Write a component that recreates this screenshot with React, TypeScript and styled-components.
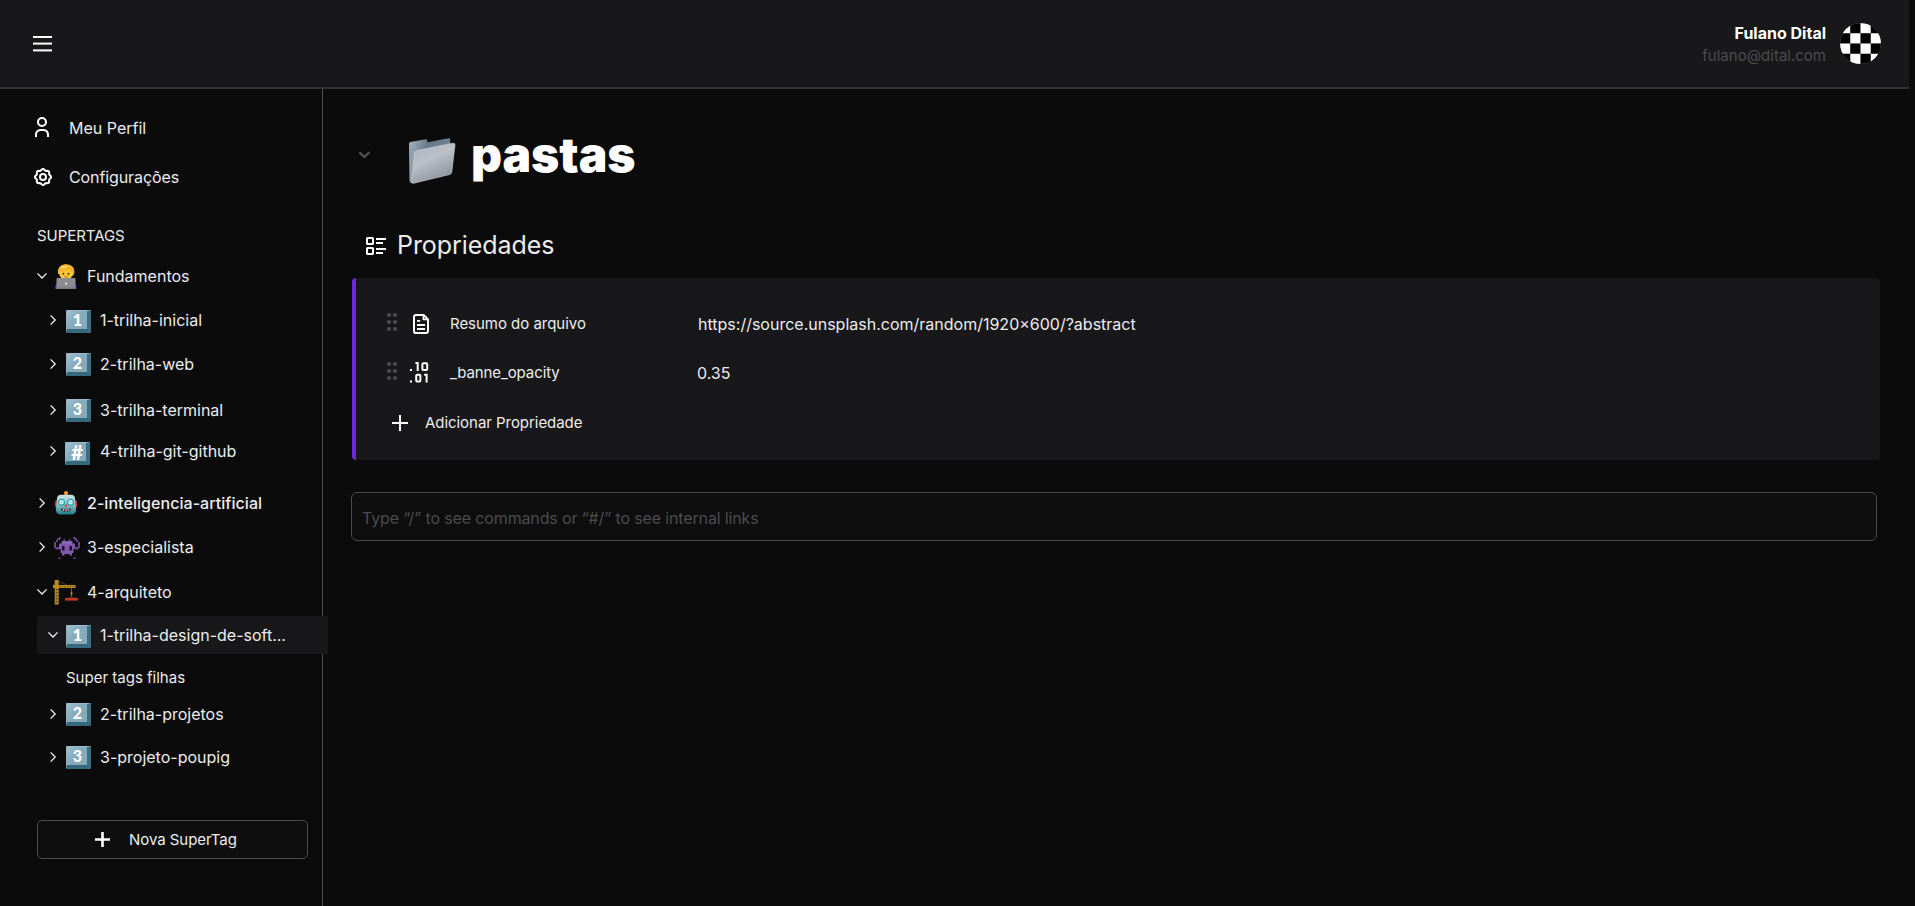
import React from 'react';
import styled, { createGlobalStyle, css } from 'styled-components';

const color = {
  page: '#0b0b0b',
  panel: '#18181a',
  line: '#323235',
  rail: '#4b4b52',
  text: '#ececec',
  muted: '#4b4b4f',
  accent: '#6d28d9',
};

const GlobalStyle = createGlobalStyle`
  *, *::before, *::after { box-sizing: border-box; }
  html, body { margin: 0; padding: 0; background: ${color.page}; }
  body { font-family: Inter, "Liberation Sans", sans-serif; overflow: hidden; }
  svg { display: block; flex: none; overflow: visible; }
`;

const Screen = styled.div`
  display: flex;
  flex-direction: column;
  width: 100vw;
  height: 100vh;
  background: ${color.page};
  color: ${color.text};
`;

const Header = styled.header`
  display: flex;
  align-items: center;
  justify-content: space-between;
  width: calc(100% - 6px);
  height: 89px;
  padding: 0 28px 0 33px;
  background: ${color.panel};
  border-bottom: 2px solid ${color.line};
`;

const MenuButton = styled.button`
  padding: 0;
  border: 0;
  background: none;
`;

const Account = styled.div`
  display: flex;
  align-items: center;
  gap: 14px;
`;

const AccountText = styled.div`
  display: flex;
  flex-direction: column;
  align-items: flex-end;
  gap: 1px;
  padding-top: 1px;
`;

const Label = styled.span<{ $size?: number; $weight?: number; $spacing?: number; $tone?: string }>`
  font-size: ${(p) => p.$size ?? 16}px;
  font-weight: ${(p) => p.$weight ?? 400};
  letter-spacing: ${(p) => p.$spacing ?? 0}px;
  color: ${(p) => p.$tone ?? 'inherit'};
  line-height: 22px;
  white-space: nowrap;
`;

const Body = styled.div`
  display: flex;
  flex: 1;
  min-height: 0;
`;

const Sidebar = styled.aside`
  display: flex;
  flex-direction: column;
  flex: none;
  width: 323px;
  border-right: 1px solid ${color.rail};
`;

const Nav = styled.nav`
  display: flex;
  flex-direction: column;
  margin: 14px 0 0 33px;
`;

const NavItem = styled.a`
  display: grid;
  grid-template-columns: 36px 1fr;
  align-items: center;
  height: 49px;
`;

const SectionTitle = styled.h2`
  display: flex;
  height: 22px;
  margin: 24px 0 0 37px;
`;

const Tree = styled.ul`
  display: flex;
  flex-direction: column;
  margin: 12px 0 0;
  padding: 0;
  list-style: none;
`;

const TreeRow = styled.li<{ $gap: number; $depth: number; $active?: boolean }>`
  display: grid;
  grid-template-columns: ${(p) => (p.$depth ? '29px 34px 1fr' : '17px 33px 1fr')};
  align-items: center;
  height: 34px;
  margin: ${(p) => p.$gap}px 0 0 37px;
  ${(p) =>
    p.$active &&
    css`
      height: 38px;
      margin-right: -6px;
      background: ${color.panel};
      border-radius: 4px 0 0 4px;
      z-index: 1;
    `}
`;

const ChildNote = styled.li`
  display: flex;
  align-items: center;
  height: 34px;
  margin: 7px 0 0 66px;
`;

const Arrow = styled.span<{ $depth: number }>`
  display: flex;
  padding-left: ${(p) => (p.$depth ? 11 : 0)}px;
`;

const Emoji = styled.span<{ $x?: number; $y?: number }>`
  display: flex;
  margin: ${(p) => (p.$y ?? 0) * 2}px 0 0 ${(p) => p.$x ?? 0}px;
`;

const Keycap = styled.span<{ $symbol?: boolean }>`
  display: flex;
  align-items: center;
  justify-content: center;
  width: 25px;
  height: 23px;
  padding-left: ${(p) => (p.$symbol ? 2 : 1)}px;
  border-style: solid;
  border-width: 1px 4px 4px 1px;
  border-color: #9dbccb #3a7083 #35697b #8bb0c1;
  background: linear-gradient(135deg, #9ec0cf 0%, #86abbd 45%, #87aabb 100%);
  border-radius: 1px;
  color: #fff;
  font: ${(p) => (p.$symbol ? '900 20px/18px' : '900 16px/18px')} Lato, sans-serif;
`;

const NewTagButton = styled.button`
  display: flex;
  align-items: center;
  width: 271px;
  height: 39px;
  margin: 46px 0 0 37px;
  padding: 0 0 0 57px;
  gap: 19px;
  border: 1px solid ${color.rail};
  border-radius: 5px;
  background: #0e0e0e;
  color: inherit;
  font-family: inherit;
`;

const Main = styled.main`
  display: flex;
  flex-direction: column;
  flex: 1;
  min-width: 0;
  padding: 35px 35px 0 29px;
`;

const TitleBar = styled.div`
  display: flex;
  align-items: center;
  height: 62px;
  padding-left: 6px;
`;

const TitleIcon = styled.span`
  display: flex;
  margin: 12px 16px 0 39px;
`;

const Title = styled.h1`
  margin: 0;
  font-size: 48px;
  font-weight: 900;
  line-height: 58px;
  color: #fff;
`;

const PropertiesTitle = styled.h3`
  display: flex;
  align-items: center;
  gap: 11px;
  height: 34px;
  margin: 43px 0 0 14px;
`;

const PropertiesName = styled.span`
  padding-bottom: 2px;
  font-size: 25px;
  font-weight: 400;
  letter-spacing: -0.05px;
  line-height: 30px;
`;

const Panel = styled.section`
  display: flex;
  flex-direction: column;
  height: 182px;
  margin-top: 15px;
  padding: 21px 0 0 31px;
  background: ${color.panel};
  border-left: 4px solid ${color.accent};
  border-radius: 4px;
`;

const PropertyRow = styled.div`
  display: grid;
  grid-template-columns: 26px 37px 247px 1fr;
  align-items: center;
  height: 49px;
`;

const Grip = styled.span`
  display: flex;
  margin-top: -4px;
`;

const TypeIcon = styled.span<{ $pull?: number }>`
  display: flex;
  margin-left: -${(p) => p.$pull ?? 0}px;
`;

const LinkValue = styled(Label)`
  padding-left: 1px;
`;

const AddProperty = styled.button`
  display: flex;
  align-items: center;
  gap: 17px;
  height: 51px;
  margin-left: 5px;
  padding: 0;
  border: 0;
  background: none;
  color: inherit;
  font-family: inherit;
`;

const CommandBox = styled.div`
  display: flex;
  align-items: center;
  height: 49px;
  margin: 32px 3px 0 -1px;
  padding: 2px 0 0 10px;
  border: 1px solid #4b4b4e;
  border-radius: 6px;
  background: #0e0e0e;
`;

const MenuIcon = () => (
  <svg width="19" height="16" viewBox="0 0 19 16" fill="#fff">
    <rect y="0" width="19" height="2" />
    <rect y="6.6" width="19" height="2" />
    <rect y="13.4" width="19" height="2" />
  </svg>
);

const Checker = () => {
  const s = 10.25;
  const cells = [];
  for (let r = 0; r < 4; r++)
    for (let c = 0; c < 4; c++)
      cells.push(
        <rect key={`${r}${c}`} x={c * s + 0.2} y={r * s + 0.2} width={s - 0.4} height={s - 0.4} fill={(r + c) % 2 ? '#000' : '#fff'} />
      );
  return (
    <svg width="41" height="41" viewBox="0 0 41 41">
      <clipPath id="disc"><circle cx="20.5" cy="20.5" r="20.5" /></clipPath>
      <g clipPath="url(#disc)">
        <rect width="41" height="41" fill="#777" />
        {cells}
      </g>
    </svg>
  );
};

const PersonIcon = () => (
  <svg width="18" height="22" viewBox="0 0 18 22" fill="none" stroke="#fff" strokeWidth="2">
    <circle cx="9" cy="5" r="4" />
    <path d="M3 20v-2.600A4.400 4.400 0 0 1 7.400 13h3.200a4.400 4.400 0 0 1 4.400 4.400V20" />
  </svg>
);

const gearRim = Array.from({ length: 64 }, (_, i) => {
  const a = (i / 64) * Math.PI * 2;
  const r = 7.4 + 0.7 * Math.cos(8 * a);
  return `${(10 + r * Math.sin(a)).toFixed(2)},${(9 - r * Math.cos(a)).toFixed(2)}`;
}).join(' ');

const GearIcon = () => (
  <svg width="20" height="18" viewBox="0 0 20 18" fill="none" stroke="#fff" strokeWidth="2" strokeLinejoin="round">
    <polygon points={gearRim} />
    <circle cx="10" cy="9" r="3" />
  </svg>
);

const Chevron = ({ open }: { open?: boolean }) => (
  <svg width="10" height="10" viewBox="0 0 10 10" fill="none" stroke="#f4f4f4" strokeWidth="1.25">
    <path d={open ? 'M.4 2.400L5 7l4.600-4.600' : 'M2.600.4L7.200 5 2.600 9.600'} />
  </svg>
);

const TitleChevron = () => (
  <svg width="12" height="8" viewBox="0 0 12 8" fill="none" stroke="#525258" strokeWidth="2.2">
    <path d="M1.300 1.200L6.300 6l5-4.800" />
  </svg>
);

const PlusIcon = ({ size, weight }: { size: number; weight: number }) => (
  <svg width={size} height={size} viewBox={`0 0 ${size} ${size}`} stroke="#fff" strokeWidth={weight}>
    <path d={`M0 ${size / 2}H${size}M${size / 2} 0V${size}`} />
  </svg>
);

const GripIcon = () => (
  <svg width="10" height="18" viewBox="0 0 10 18" fill="#4b4b51">
    {[2, 9, 16].map((y) => (
      <g key={y}>
        <circle cx="2" cy={y} r="2" />
        <circle cx="8" cy={y} r="2" />
      </g>
    ))}
  </svg>
);

const FileIcon = () => (
  <svg width="16" height="20" viewBox="0 0 16 20" fill="none" stroke="#fff" strokeWidth="2" strokeLinejoin="round">
    <path d="M10.600 1H2.800A1.800 1.800 0 0 0 1 2.800v14.400A1.800 1.800 0 0 0 2.800 19h10.400a1.800 1.800 0 0 0 1.800-1.800V5.400z" />
    <path d="M10.400 1.400v4h4.200" strokeWidth="1.6" />
    <path d="M4 6.900h3.200M4 11h8M4 15h8" strokeWidth="1.8" />
  </svg>
);

const BinaryIcon = () => (
  <svg width="19" height="21" viewBox="0 0 19 21" fill="none" stroke="#fff" strokeWidth="2">
    <path d="M1 6.900v2M1 18.400v2" />
    <path d="M5.400 1.100h2.300V9" />
    <rect x="12.400" y="1.200" width="4.800" height="6.800" rx="1" />
    <rect x="6.200" y="12.800" width="4.200" height="6.800" rx="1" />
    <path d="M14.200 12.800h2.400v7.800" />
  </svg>
);

const ListIcon = () => (
  <svg width="20" height="18" viewBox="0 0 20 18" fill="none" stroke="#fff" strokeWidth="2">
    <rect x="1" y="1" width="6" height="6" rx=".6" />
    <rect x="1" y="11" width="6" height="6" rx=".6" />
    <path d="M10 2h10M10 6h7M10 12h10M10 16h7" />
  </svg>
);

const FolderIcon = () => (
  <svg width="46" height="46" viewBox="0 0 46 46">
    <defs>
      <linearGradient id="back" x1="0" y1="0" x2="1" y2=".3">
        <stop offset="0" stopColor="#a9b6c0" />
        <stop offset=".45" stopColor="#66798a" />
        <stop offset="1" stopColor="#71818f" />
      </linearGradient>
      <linearGradient id="front" x1=".2" y1="0" x2=".7" y2="1">
        <stop offset="0" stopColor="#adb5bf" />
        <stop offset=".4" stopColor="#bcc0c8" />
        <stop offset="1" stopColor="#868d97" />
      </linearGradient>
    </defs>
    <path d="M0 5.600Q0 4.200 1.400 4L16.600 1.200Q18 1 18.200 2.200l.3 2L39.600.2Q41.200 0 41.200 1.600L41 36 3 45.200Q.6 45.400.4 42z" fill="url(#back)" />
    <path d="M1 6v36l1.600 2.600L5.800 14z" fill="#8fa0ac" />
    <path d="M5.400 15.400Q5.600 13 8 12.500L43.800 5.200Q46.200 5 46 7l-3.200 27q-.3 2-2.200 2.500L4.600 45.300Q2.400 45.800 2.800 43z" fill="url(#front)" stroke="#ccd4dc" strokeWidth=".6" />
  </svg>
);

const CoderEmoji = () => (
  <svg width="22" height="25" viewBox="0 0 22 25">
    <path d="M0 25q0-6 3.500-8h15q3 2 3 8z" fill="#2c35c0" />
    <path d="M3 10Q2 1 10.500.3q9 0 9 7.500-.3 3-1.500 4z" fill="#efab22" />
    <circle cx="11" cy="9.300" r="6.700" fill="#fbc83a" />
    <path d="M3.200 9.500Q2.400 1.300 10.500.5q8 .2 8.300 7.500-4 .2-7-2.500Q8 8.300 4.600 7.600z" fill="#f3b52c" />
    <path d="M5 4.300Q8 1 13.500 1.900 9.500 4.800 5 4.300z" fill="#ffe07c" />
    <circle cx="8.300" cy="9.800" r="1" fill="#4b2e12" />
    <circle cx="13.500" cy="9.800" r="1" fill="#4b2e12" />
    <path d="M9 12.500q2 1 4 0" stroke="#a8631c" strokeWidth=".8" fill="none" />
    <rect x="1.500" y="14" width="19" height="11" rx="1" fill="#8c8c90" />
    <rect x="1" y="23.600" width="20" height="1.400" fill="#77777b" />
    <circle cx="11" cy="19.500" r="1.100" fill="#eee" />
  </svg>
);

const RobotEmoji = () => (
  <svg width="22" height="24" viewBox="0 0 22 24">
    <defs>
      <linearGradient id="robot" x1="0" y1="0" x2="0" y2="1">
        <stop offset="0" stopColor="#d3e2e2" />
        <stop offset=".55" stopColor="#7fbcc0" />
        <stop offset="1" stopColor="#1f7f8c" />
      </linearGradient>
    </defs>
    <rect x="0" y="9.500" width="3" height="7" rx="1.200" fill="#c33b2f" />
    <rect x="19" y="9.500" width="3" height="7" rx="1.200" fill="#c33b2f" />
    <path d="M7.500 5.500a3.700 3.700 0 0 1 7 0z" fill="#6c49a8" />
    <circle cx="11" cy="2" r="2" fill="#f5a51e" />
    <path d="M2 7Q2.400 4 6 3.800h10q3.600.2 4 3.200l1 11q.2 5.200-4 5.400H5Q.8 23.200 1 18z" fill="url(#robot)" />
    <circle cx="6.500" cy="11.300" r="2.900" fill="#f2ffff" stroke="#1f9fb0" strokeWidth="1.200" />
    <circle cx="15.500" cy="11.300" r="2.900" fill="#f2ffff" stroke="#1f9fb0" strokeWidth="1.200" />
    <circle cx="6.500" cy="11.300" r="1" fill="#58c6d4" />
    <circle cx="15.500" cy="11.300" r="1" fill="#58c6d4" />
    <path d="M11 12.500l1.700 3.300H9.300z" fill="#e0402e" />
    <path d="M6 17.300q5 1.600 10 0l-.8 2.700q-4.200 1-8.400 0z" fill="#43242a" />
    <path d="M7.800 18.800h1.400M10.300 19.100h1.400M12.800 18.800h1.400" stroke="#fff" strokeWidth="1.200" />
  </svg>
);

const InvaderEmoji = () => (
  <svg width="26" height="23" viewBox="0 0 26 23" fill="#7f58ae">
    <path d="M7.500 4h2V2.500H11V4h4V2.500h1.500V4h2v2.500H21V12h-1.500v4H18v2.500h-2.500V17h-5v1.500H8V16H6.500v-4H5V6.500h2.500z" />
    <path d="M3 1h3v2H4v2H2V3h1zM20 1h3v2h1v2h-2V3h-2zM0 5h2v5h3v2.500H1.500V11H0zM24 5h2v6h-1.500v1.500H21V10h3zM5 0h2v1.500H5zM19 0h2v1.500h-2z" fill="#65468c" />
    <path d="M9 5h8v1.500H9z" fill="#a07bc9" opacity=".6" />
    <path d="M8 9h2.500v4.500H8zM15.500 9H18v4.500h-2.500z" fill="#1a1023" />
    <path d="M4.500 20.500h2V22h-2zM19.500 20.500h2V22h-2z" fill="#6d4aa0" />
  </svg>
);

const CraneEmoji = () => (
  <svg width="25" height="25" viewBox="0 0 25 25" fill="none">
    <path d="M3.800.5L14 5M3.800.5L.5 5" stroke="#5c4a1c" strokeWidth=".7" />
    <path d="M0 6.500h22.500" stroke="#bd8d22" strokeWidth="3" />
    <path d="M6 6.600h16" stroke="#5d4611" strokeWidth=".9" strokeDasharray="1.500 1.200" />
    <path d="M3.700 0v24.500" stroke="#b98a24" strokeWidth="4" />
    <path d="M3.700 9v15" stroke="#5a4315" strokeWidth="1.800" strokeDasharray="1.500 1.500" />
    <path d="M18.500 8v9.500" stroke="#80703f" strokeWidth=".8" />
    <path d="M18.500 12v3" stroke="#bd8d22" strokeWidth="1.600" />
    <path d="M14.500 18.500l4-2 4 2" stroke="#555" strokeWidth=".6" />
    <path d="M12 19.300h13" stroke="#c4391f" strokeWidth="2.600" />
  </svg>
);

type Row = {
  text: string;
  gap: number;
  depth?: number;
  open?: boolean;
  active?: boolean;
  weight?: number;
  spacing?: number;
  cap?: string;
  emoji?: React.ReactNode;
  x?: number;
  y?: number;
};

const topRows: Row[] = [
  { text: 'Fundamentos', gap: 0, open: true, emoji: <CoderEmoji />, x: 1 },
  { text: '1-trilha-inicial', gap: 10, depth: 1, cap: '1', y: 1 },
  { text: '2-trilha-web', gap: 10, depth: 1, cap: '2' },
  { text: '3-trilha-terminal', gap: 12, depth: 1, cap: '3' },
  { text: '4-trilha-git-github', gap: 7, depth: 1, cap: '#', x: -1, y: 2 },
  { text: '2-inteligencia-artificial', gap: 18, emoji: <RobotEmoji />, x: 1, weight: 500, spacing: 0.05 },
  { text: '3-especialista', gap: 10, emoji: <InvaderEmoji />, y: 1 },
  { text: '4-arquiteto', gap: 11, open: true, emoji: <CraneEmoji />, x: -1 },
  { text: '1-trilha-design-de-soft...', gap: 7, depth: 1, open: true, active: true, cap: '1', y: 1 },
];

const lastRows: Row[] = [
  { text: '2-trilha-projetos', gap: 2, depth: 1, cap: '2' },
  { text: '3-projeto-poupig', gap: 9, depth: 1, cap: '3' },
];

const TreeItem = ({ row }: { row: Row }) => {
  const depth = row.depth ?? 0;
  return (
    <TreeRow $gap={row.gap} $depth={depth} $active={row.active}>
      <Arrow $depth={depth}><Chevron open={row.open} /></Arrow>
      <Emoji $x={row.x} $y={row.y}>
        {row.cap ? <Keycap $symbol={row.cap === '#'}>{row.cap}</Keycap> : row.emoji}
      </Emoji>
      <Label $weight={row.weight} $spacing={row.spacing}>{row.text}</Label>
    </TreeRow>
  );
};

export default function App() {
  return (
    <>
      <GlobalStyle />
      <Screen>
        <Header>
          <MenuButton aria-label="Menu"><MenuIcon /></MenuButton>
          <Account>
            <AccountText>
              <Label $weight={700} $tone="#fff">Fulano Dital</Label>
              <Label $size={15} $tone={color.muted}>fulano@dital.com</Label>
            </AccountText>
            <Checker />
          </Account>
        </Header>
        <Body>
          <Sidebar>
            <Nav>
              <NavItem><PersonIcon /><Label>Meu Perfil</Label></NavItem>
              <NavItem><GearIcon /><Label $spacing={-0.1}>Configurações</Label></NavItem>
            </Nav>
            <SectionTitle><Label $size={15} $spacing={-0.05}>SUPERTAGS</Label></SectionTitle>
            <Tree>
              {topRows.map((row) => <TreeItem key={row.text} row={row} />)}
              <ChildNote><Label $size={15}>Super tags filhas</Label></ChildNote>
              {lastRows.map((row) => <TreeItem key={row.text} row={row} />)}
            </Tree>
            <NewTagButton>
              <PlusIcon size={15} weight={2.6} />
              <Label $size={15} $spacing={-0.05}>Nova SuperTag</Label>
            </NewTagButton>
          </Sidebar>
          <Main>
            <TitleBar>
              <TitleChevron />
              <TitleIcon><FolderIcon /></TitleIcon>
              <Title>pastas</Title>
            </TitleBar>
            <PropertiesTitle>
              <ListIcon />
              <PropertiesName>Propriedades</PropertiesName>
            </PropertiesTitle>
            <Panel>
              <PropertyRow>
                <Grip><GripIcon /></Grip>
                <TypeIcon><FileIcon /></TypeIcon>
                <Label $size={15} $spacing={-0.03}>Resumo do arquivo</Label>
                <LinkValue>https://source.unsplash.com/random/1920x600/?abstract</LinkValue>
              </PropertyRow>
              <PropertyRow>
                <Grip><GripIcon /></Grip>
                <TypeIcon $pull={3}><BinaryIcon /></TypeIcon>
                <Label $size={15} $spacing={-0.1}>_banne_opacity</Label>
                <Label>0.35</Label>
              </PropertyRow>
              <AddProperty>
                <PlusIcon size={16} weight={2} />
                <Label $size={15} $spacing={-0.05}>Adicionar Propriedade</Label>
              </AddProperty>
            </Panel>
            <CommandBox>
              <Label $tone={color.muted} $spacing={-0.14}>Type “/” to see commands or “#/” to see internal links</Label>
            </CommandBox>
          </Main>
        </Body>
      </Screen>
    </>
  );
}
